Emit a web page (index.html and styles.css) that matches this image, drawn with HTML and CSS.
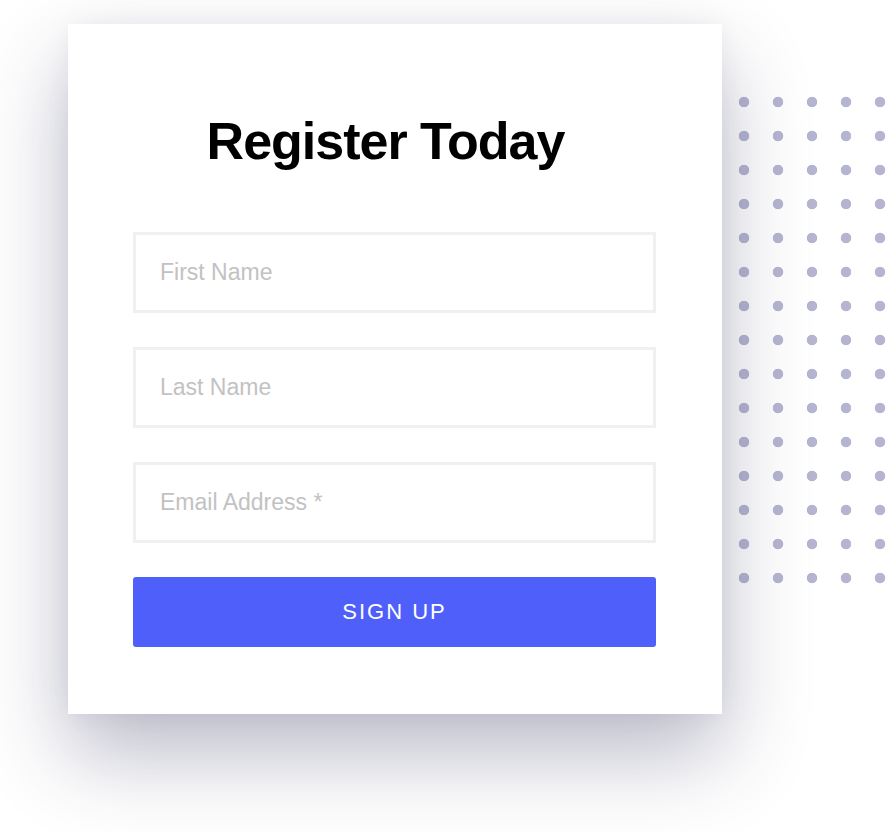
FILE: index.html
```html
<!DOCTYPE html>
<html lang="en">
<head>
<meta charset="utf-8">
<title>Register Today</title>
<link rel="stylesheet" href="styles.css">
</head>
<body>
<div class="stage">
  <div class="dots" aria-hidden="true"></div>
  <form class="card">
    <h1 class="title">Register Today</h1>
    <input class="field" type="text" placeholder="First Name">
    <input class="field" type="text" placeholder="Last Name">
    <input class="field" type="email" placeholder="Email Address *">
    <button class="submit" type="button">SIGN UP</button>
  </form>
</div>
</body>
</html>
```
FILE: styles.css
```css
* { box-sizing: border-box; }
html, body {
  margin: 0;
  padding: 0;
  background: #ffffff;
  font-family: "Liberation Sans", Arial, sans-serif;
}
.stage {
  position: relative;
  width: 886px;
  height: 832px;
  overflow: hidden;
  padding: 24px 0 0 68px;
}
.dots {
  position: absolute;
  left: 727px;
  top: 85px;
  width: 170px;
  height: 510px;
  background-image: radial-gradient(circle at 17px 17px, #b5b5d1 0, #b5b5d1 4.9px, rgba(181,181,209,0) 5.6px);
  background-size: 34px 34px;
  z-index: 0;
}
.card {
  position: relative;
  z-index: 1;
  width: 654px;
  height: 690px;
  background: #ffffff;
  box-shadow: 0 40px 80px rgba(40, 45, 85, 0.32), 0 0 24px rgba(40, 45, 85, 0.05);
  padding: 91px 66px 66px 65px;
  display: flex;
  flex-direction: column;
}
.title {
  margin: 0 18px 65px 0;
  font-size: 52px;
  line-height: 52px;
  font-weight: 700;
  letter-spacing: -1px;
  color: #000000;
  text-align: center;
}
.field {
  display: block;
  width: 523px;
  height: 81px;
  margin: 0 0 34px 0;
  padding: 0 24px;
  border: 3px solid #f0f0f0;
  border-radius: 0;
  background: #ffffff;
  font-family: "Liberation Sans", Arial, sans-serif;
  font-size: 23px;
  color: #333;
  outline: none;
}
.field::placeholder {
  color: #c2c2c2;
  opacity: 1;
}
.submit {
  display: block;
  width: 523px;
  height: 70px;
  margin: 0;
  border: 0;
  border-radius: 3px;
  background: #4f5ffa;
  color: #ffffff;
  font-family: "Liberation Sans", Arial, sans-serif;
  font-size: 22px;
  letter-spacing: 2px;
  text-indent: 0;
  cursor: pointer;
}
```
